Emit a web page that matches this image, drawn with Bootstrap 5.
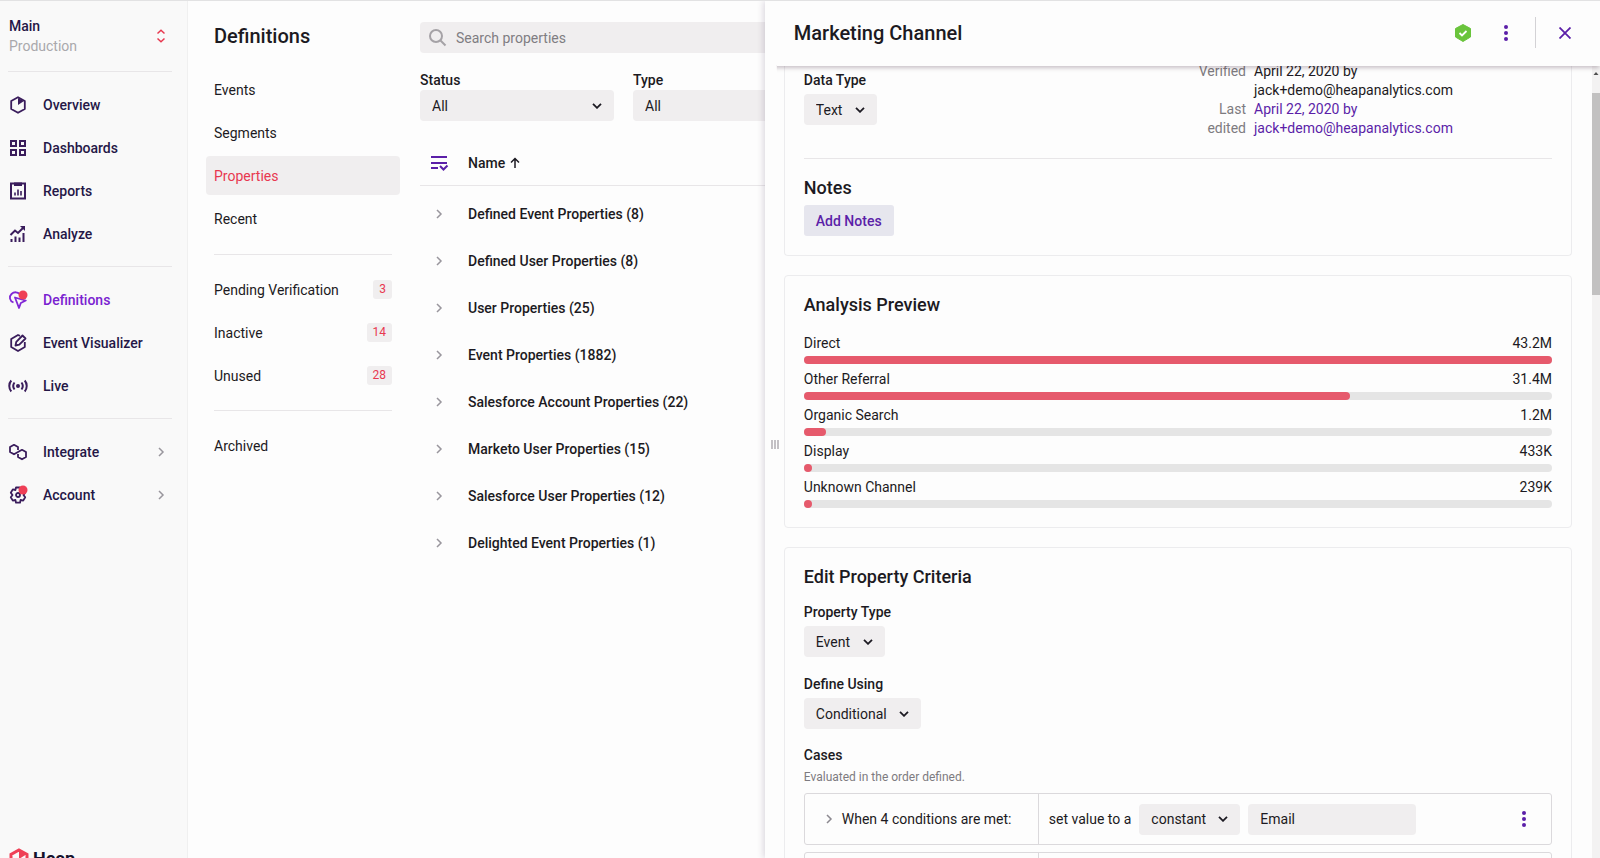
<!DOCTYPE html>
<html lang="en">
<head>
<meta charset="utf-8">
<meta name="viewport" content="width=device-width, initial-scale=1">
<title>Definitions – Marketing Channel</title>
<link href="https://cdn.jsdelivr.net/npm/bootstrap@5.3.0/dist/css/bootstrap.min.css" rel="stylesheet">
<style>
  :root { --ink:#1c1a22; --navy:#251747; --purple:#5b1fa8; --red:#e8384f; --field:#f0eeef; --line:#e8e6e8; }
  body { font-family:Roboto,"Liberation Sans",sans-serif; font-size:14px; line-height:20px; color:var(--ink); background:#fdfdfd; }
  a { color:inherit; text-decoration:none; }
  hr { margin:0; border-top:1px solid var(--line); opacity:1; }
  h1,h2 { margin:0; font-weight:500; line-height:24px; }
  h1 { font-size:20px; }
  h2 { font-size:18px; }
  label, .label-text { font-weight:500; line-height:20px; display:block; }
  svg { display:block; flex:none; }
  .app-shell { border-top:1px solid #e2e2e3; }
  .side-bar { width:188px; background:#f9f9f9; border-right:1px solid #f0f0f0; padding:15px 15px 0 8px; color:var(--navy); font-weight:500; }
  .side-bar hr { margin:0 0 11px; }
  .side-bar li a { height:43px; padding-right:7px; }
  .side-bar li svg:first-child { width:20px; height:20px; margin-right:15px; }
  .side-bar ul { margin:0 0 11px; }
  .workspace-btn { height:40px; margin-bottom:15px; padding:0 6px 0 1px; border:0; background:none; color:inherit; font-weight:500; text-align:left; }
  .muted-soft { color:#a9a8ac; font-weight:400; }
  .active-item { color:#7a22d0; }
  .brand-mark { color:#17122b; font-size:18px; font-weight:700; line-height:22px; gap:3px; height:10px; }
  .sub-nav { width:212px; padding:23px 0 0 18px; }
  .sub-nav h1 { padding-left:8px; }
  .sub-nav ul { margin:0; }
  .sub-nav .types { padding:22px 0 12px; }
  .sub-nav .states { padding:15px 0 11px; }
  .sub-nav li { height:43px; }
  .sub-nav li a { height:39px; padding:0 8px; border-radius:4px; }
  .sub-nav li a.current { background:var(--field); color:var(--red); }
  .sub-nav hr { margin:0 8px; }
  .count-chip { background:var(--field); color:var(--red); font-size:12px; line-height:19px; padding:0 6px; border-radius:3px; }
  .main-pane { padding:21px 24px 0 20px; min-width:0; }
  .field { height:31px; border:0; border-radius:4px; background-color:var(--field); color:inherit; padding:0 12px; }
  .search-box input { border:0; background:none; padding:0; outline:0; }
  .search-box input::placeholder { color:#7f7d82; opacity:1; }
  select.field { appearance:none; padding-right:34px; background-image:url("data:image/svg+xml,%3Csvg xmlns='http://www.w3.org/2000/svg' width='10' height='6' fill='none' stroke='%231c1a22' stroke-width='1.8'%3E%3Cpath d='M1 .8l4 4 4-4'/%3E%3C/svg%3E"); background-repeat:no-repeat; background-position:right 12px center; }
  .filters { padding-top:17px; gap:19px; }
  .filter-col { width:194px; }
  .prop-table { margin:0; width:100%; font-weight:500; }
  .prop-table th, .prop-table td { height:47px; padding:0; vertical-align:middle; font-weight:500; }
  .prop-table thead th { height:48px; padding-top:4px; border-bottom:1px solid var(--line); }
  .prop-table tbody::before { content:""; display:block; height:5px; }
  .prop-table .icon-col { width:48px; padding-left:11px; }
  .plain-btn { border:0; background:none; padding:0; color:inherit; }
  .drawer { width:52.2%; background:#fdfdfd; box-shadow:-2px 0 6px rgba(60,40,80,.16); }
  .drawer-head { height:65px; padding:0 29px 2px; box-shadow:0 3px 4px -1px rgba(70,40,60,.28); clip-path:inset(0 0 -8px 12px); background:#fdfdfd; z-index:2; }
  .v-rule { width:1px; height:31px; margin:0 23px 0 27px; background:#d3d2d5; }
  .grip { width:19px; padding:0 0 36px 6px; }
  .grip i { width:2px; height:9px; background:#c3c0c4; margin-right:1px; }
  .gutter { width:20px; }
  .panel { border:1px solid #ececee; border-radius:4px; padding:17px 19px 19px; margin-bottom:19px; }
  .panel-top { margin-top:-4px; border-top:0; padding-top:0; }
  .notes-title { padding:17px 0 5px; }
  .meta-list { width:358px; display:grid; grid-template-columns:52px 1fr; column-gap:8px; line-height:19px; margin:0 0 20px; }
  .meta-list dt { text-align:right; color:#7d7b80; font-weight:400; }
  .meta-list dd { margin:0; }
  .text-purple { color:var(--purple); }
  .meter { height:8px; margin-top:3px; background:#e5e5e5; border-radius:4px; }
  .meter-fill { height:8px; min-width:8px; border-radius:4px; background:#e65a6c; }
  .meter-row + .meter-row { margin-top:5px; }
  .note-btn { border:0; border-radius:3px; height:31px; padding:0 12px; background:#e6e6ee; color:var(--purple); font-weight:500; }
  .criteria-title { padding-bottom:9px; }
  .define-label { padding-top:17px; }
  .case-row { border:1px solid #dbd9dc; border-radius:3px; height:52px; margin-bottom:7px; }
  .case-when { width:234px; border-right:1px solid #dbd9dc; padding-left:20px; gap:9px; }
  .case-then { padding:0 25px 0 10px; }
  .case-value { width:168px; }
  .hint { font-size:12px; color:#7d7b80; padding:2px 0 6px; }
  .scroll-track { width:8px; background:#f3f2f2; padding-top:3px; }
  .scroll-thumb { height:202px; background:#c2c1c1; margin-top:16px; }
</style>
</head>
<body>
<div class="app-shell d-flex vh-100 overflow-hidden position-relative">
  <nav class="side-bar d-flex flex-column flex-shrink-0" aria-label="Main">
    <button class="workspace-btn d-flex align-items-center justify-content-between w-100" type="button">
      <span>Main<br><span class="muted-soft">Production</span></span>
      <svg width="10" height="14" viewBox="0 0 10 14" fill="none" stroke="#e8384f" stroke-width="1.5"><path d="M1.5 4.5 5 1.3l3.500 3.200M1.500 9.500 5 12.700l3.500-3.200"/></svg>
    </button>
    <hr>
    <ul class="list-unstyled">
      <li><a class="d-flex align-items-center" href="#"><svg viewBox="0 0 20 20" fill="none" stroke="#3a1d5c" stroke-width="1.800" stroke-linejoin="round"><path d="M10 2.200 16.800 6v8L10 17.800 3.200 14V6z"/><path d="M10 3v7l6-4z" fill="#3a1d5c" stroke="none"/></svg>Overview</a></li>
      <li><a class="d-flex align-items-center" href="#"><svg viewBox="0 0 20 20" fill="none" stroke="#3a1d5c" stroke-width="2"><path d="M3 3h5v5H3zM12 3h5v5h-5zM3 12h5v5H3zM12 12h5v5h-5z"/></svg>Dashboards</a></li>
      <li><a class="d-flex align-items-center" href="#"><svg viewBox="0 0 20 20" fill="none" stroke="#3a1d5c" stroke-width="2"><path d="M3 2.500h14v15H3z"/><path d="M7 2.500h6V4H7z" fill="#3a1d5c"/><path d="M7 14.500v-3M10 14.500v-6M13 14.500v-4.500" stroke-width="1.600"/></svg>Reports</a></li>
      <li><a class="d-flex align-items-center" href="#"><svg viewBox="0 0 20 20" fill="none" stroke="#3a1d5c" stroke-width="2"><path d="M2.500 11 7 6.500l3 2.500 5.500-5.500" /><path d="M12 2h5v5z" fill="#3a1d5c" stroke="none"/><path d="M3.500 18v-3M7.500 18v-5.500M11.500 18v-4.500M15.500 18V9"/></svg>Analyze</a></li>
    </ul>
    <hr>
    <ul class="list-unstyled">
      <li><a class="active-item d-flex align-items-center" href="#"><svg viewBox="0 0 20 20" fill="none" stroke="#8127d6" stroke-width="1.800" stroke-linejoin="round"><path d="M5.500 12.500C1.500 11 .8 6.500 3.500 4 6.200 1.400 10 2 11.500 4"/><path d="M7 7.500 11 18l1.800-5 5-2.500-4-1z"/><circle cx="15" cy="5" r="4.500" fill="#ef3f56" stroke="none"/></svg>Definitions</a></li>
      <li><a class="d-flex align-items-center" href="#"><svg viewBox="0 0 20 20" fill="none" stroke="#3a1d5c" stroke-width="1.800" stroke-linejoin="round"><path d="M12 2.800 10 2 3.200 6v8l6.800 4 6.800-4V9"/><path d="m7.500 12.500.8-3.700L14.500 2.500l3 3-6.200 6.200z"/></svg>Event Visualizer</a></li>
      <li><a class="d-flex align-items-center" href="#"><svg viewBox="0 0 20 20" fill="none" stroke="#3a1d5c" stroke-width="2"><circle cx="10" cy="10" r="2" fill="#3a1d5c" stroke="none"/><path d="M3.300 4.500C.6 7.500.6 12.500 3.300 15.500M16.700 4.500c2.700 3 2.700 8 0 11M6.500 6.500c-1.500 2-1.500 5 0 7M13.500 6.500c1.500 2 1.500 5 0 7"/></svg>Live</a></li>
    </ul>
    <hr>
    <ul class="list-unstyled">
      <li><a class="d-flex align-items-center" href="#"><svg viewBox="0 0 20 20" fill="none" stroke="#3a1d5c" stroke-width="1.800" stroke-linejoin="round"><path d="M10 8V5L6 2.800 2 5v5l4 2.300L10 10l4-2.200L18 10v5l-4 2.300L10 15v-3"/></svg>Integrate<svg class="ms-auto" width="8" height="10" viewBox="0 0 8 10" fill="none" stroke="#99969d" stroke-width="1.500"><path d="m2 1 4 4-4 4"/></svg></a></li>
      <li><a class="d-flex align-items-center" href="#"><svg viewBox="0 0 20 20" fill="none" stroke="#3a1d5c" stroke-width="1.800" stroke-linejoin="round"><path d="M8 2.500h4l.6 2.500 2.300-.6 2.300 3.300L15.500 10l1.700 2.300-2 3.300-2.600-.6-.6 2.700H8L7.400 15l-2.600.6-2-3.300L4.500 10 2.800 7.700l2-3.300 2.600.6z"/><circle cx="10" cy="10" r="2"/><circle cx="15" cy="5" r="4.500" fill="#ef3f56" stroke="none"/></svg>Account<svg class="ms-auto" width="8" height="10" viewBox="0 0 8 10" fill="none" stroke="#99969d" stroke-width="1.500"><path d="m2 1 4 4-4 4"/></svg></a></li>
    </ul>
    <a class="brand-mark d-flex mt-auto overflow-hidden" href="#"><svg width="22" height="22" viewBox="0 0 22 22" fill="none" stroke="#ef4056" stroke-width="3"><path d="M11 2 19 6.500V15l-8 4.500L3 15V6.500z"/><path d="M11 1v10l8-5z" fill="#ef4056" stroke="none"/></svg><span>Heap</span></a>
  </nav>

  <section class="sub-nav flex-shrink-0">
    <h1>Definitions</h1>
    <ul class="types list-unstyled">
      <li><a class="d-flex align-items-center" href="#">Events</a></li>
      <li><a class="d-flex align-items-center" href="#">Segments</a></li>
      <li><a class="current d-flex align-items-center" href="#">Properties</a></li>
      <li><a class="d-flex align-items-center" href="#">Recent</a></li>
    </ul>
    <hr>
    <ul class="states list-unstyled">
      <li><a class="d-flex align-items-center justify-content-between" href="#">Pending Verification<span class="count-chip">3</span></a></li>
      <li><a class="d-flex align-items-center justify-content-between" href="#">Inactive<span class="count-chip">14</span></a></li>
      <li><a class="d-flex align-items-center justify-content-between" href="#">Unused<span class="count-chip">28</span></a></li>
    </ul>
    <hr>
    <ul class="states list-unstyled">
      <li><a class="d-flex align-items-center" href="#">Archived</a></li>
    </ul>
  </section>

  <main class="main-pane flex-grow-1">
    <div class="search-box field d-flex align-items-center px-2">
      <svg width="20" height="20" viewBox="0 0 20 20" fill="none" stroke="#a5a2a6" stroke-width="2"><circle cx="8" cy="8" r="6"/><path d="m12.500 12.500 5 5"/></svg>
      <input class="flex-grow-1 ms-2" type="search" placeholder="Search properties" aria-label="Search properties">
    </div>
    <div class="filters d-flex">
      <div class="filter-col">
        <label for="status">Status</label>
        <select id="status" class="field w-100"><option>All</option></select>
      </div>
      <div class="filter-col">
        <label for="type">Type</label>
        <select id="type" class="field w-100"><option>All</option></select>
      </div>
    </div>
    <table class="prop-table mt-3">
      <thead><tr>
        <th class="icon-col"><button class="plain-btn d-block" type="button" aria-label="Expand all"><svg width="18" height="16" viewBox="0 0 18 16" fill="none" stroke="#5b1fa8" stroke-width="2"><path d="M0 2h16M0 8h16M0 13h7M9 11l3.500 3.500 4-4"/></svg></button></th>
        <th><span class="d-flex align-items-center">Name<svg class="ms-1" width="12" height="12" viewBox="0 0 12 12" fill="none" stroke="#1c1a22" stroke-width="1.500"><path d="M6 11V2M2 5.500 6 1.500l4 4"/></svg></span></th>
      </tr></thead>
      <tbody id="rows"></tbody>
    </table>
  </main>

  <aside class="drawer position-absolute top-0 bottom-0 end-0 d-flex flex-column">
    <header class="drawer-head position-relative d-flex align-items-center flex-shrink-0">
      <h1 class="me-auto">Marketing Channel</h1>
      <svg width="18" height="20" viewBox="0 0 18 20"><path d="M9 1.500 16.500 5.500v8.500L9 18.500 1.500 14V5.500z" fill="#6ac43c" stroke="#6ac43c" stroke-linejoin="round"/><path d="m5.500 10 2.500 2.500 4.500-4.500" fill="none" stroke="#fff" stroke-width="1.800"/></svg>
      <button class="plain-btn ms-4 ps-2" type="button" aria-label="More"><svg width="4" height="16" viewBox="0 0 4 16" fill="#5b1fa8"><circle cx="2" cy="2" r="2"/><circle cx="2" cy="8" r="2"/><circle cx="2" cy="14" r="2"/></svg></button>
      <span class="v-rule"></span>
      <button class="plain-btn" type="button" aria-label="Close"><svg width="12" height="12" viewBox="0 0 12 12" stroke="#5b1fa8" stroke-width="1.800"><path d="m.5.5 11 11M11.500.5l-11 11"/></svg></button>
    </header>
    <div class="d-flex flex-grow-1 overflow-hidden">
      <div class="grip d-flex align-items-center flex-shrink-0"><i></i><i></i><i></i></div>
      <div class="flex-grow-1">
        <section class="panel panel-top">
          <div class="d-flex justify-content-between">
            <div class="pt-1">
              <label class="pt-1 mb-1" for="dtype">Data Type</label>
              <select id="dtype" class="field"><option>Text</option></select>
            </div>
            <dl class="meta-list">
              <dt>Verified</dt><dd>April 22, 2020 by<br>jack+demo@heapanalytics.com</dd>
              <dt>Last edited</dt><dd><a class="text-purple" href="#">April 22, 2020 by<br>jack+demo@heapanalytics.com</a></dd>
            </dl>
          </div>
          <hr>
          <h2 class="notes-title">Notes</h2>
          <button class="note-btn" type="button">Add Notes</button>
        </section>
        <section class="panel">
          <h2 class="mb-3">Analysis Preview</h2>
          <div id="meters"></div>
        </section>
        <section class="panel">
          <h2 class="criteria-title">Edit Property Criteria</h2>
          <label class="pt-1 mb-1" for="ptype">Property Type</label>
          <select id="ptype" class="field"><option>Event</option></select>
          <label class="define-label mb-1" for="duse">Define Using</label>
          <select id="duse" class="field"><option>Conditional</option></select>
          <div class="label-text pt-3">Cases</div>
          <div class="hint">Evaluated in the order defined.</div>
          <div class="case-row d-flex">
            <div class="case-when d-flex align-items-center flex-shrink-0"><svg width="8" height="10" viewBox="0 0 8 10" fill="none" stroke="#8c8990" stroke-width="1.500"><path d="m2 1 4 4-4 4"/></svg>When 4 conditions are met:</div>
            <div class="case-then d-flex align-items-center flex-grow-1 gap-2">
              <span>set value to a</span>
              <select class="field" aria-label="Value kind"><option>constant</option></select>
              <input class="case-value field" type="text" value="Email" aria-label="Value">
              <button class="plain-btn ms-auto" type="button" aria-label="Case options"><svg width="4" height="16" viewBox="0 0 4 16" fill="#5b1fa8"><circle cx="2" cy="2" r="2"/><circle cx="2" cy="8" r="2"/><circle cx="2" cy="14" r="2"/></svg></button>
            </div>
          </div>
          <div class="case-row d-flex"><div class="case-when"></div></div>
        </section>
      </div>
      <div class="gutter flex-shrink-0"></div>
      <div class="scroll-track flex-shrink-0" aria-hidden="true">
        <svg width="8" height="8" viewBox="0 0 8 8"><path d="M1.500 6 4 3l2.500 3z" fill="#505050"/></svg>
        <div class="scroll-thumb"></div>
      </div>
    </div>
  </aside>
</div>
<script src="https://cdn.jsdelivr.net/npm/bootstrap@5.3.0/dist/js/bootstrap.bundle.min.js"></script>
<script>
  const groups = ["Defined Event Properties (8)", "Defined User Properties (8)", "User Properties (25)", "Event Properties (1882)",
    "Salesforce Account Properties (22)", "Marketo User Properties (15)", "Salesforce User Properties (12)", "Delighted Event Properties (1)"];
  document.getElementById("rows").innerHTML = groups.map(g =>
    `<tr><td class="icon-col"><button class="plain-btn d-block ps-1" type="button" aria-label="Expand ${g}"><svg width="8" height="10" viewBox="0 0 8 10" fill="none" stroke="#99969d" stroke-width="1.500"><path d="m2 1 4 4-4 4"/></svg></button></td><td>${g}</td></tr>`).join("");
  const channels = [["Direct", "43.2M", 100], ["Other Referral", "31.4M", 73], ["Organic Search", "1.2M", 3], ["Display", "433K", 1], ["Unknown Channel", "239K", 1]];
  document.getElementById("meters").innerHTML = channels.map(([n, v, w]) =>
    `<div class="meter-row"><div class="d-flex justify-content-between"><span>${n}</span><span>${v}</span></div><div class="meter"><div class="meter-fill" style="width:${w}%"></div></div></div>`).join("");
</script>
</body>
</html>
